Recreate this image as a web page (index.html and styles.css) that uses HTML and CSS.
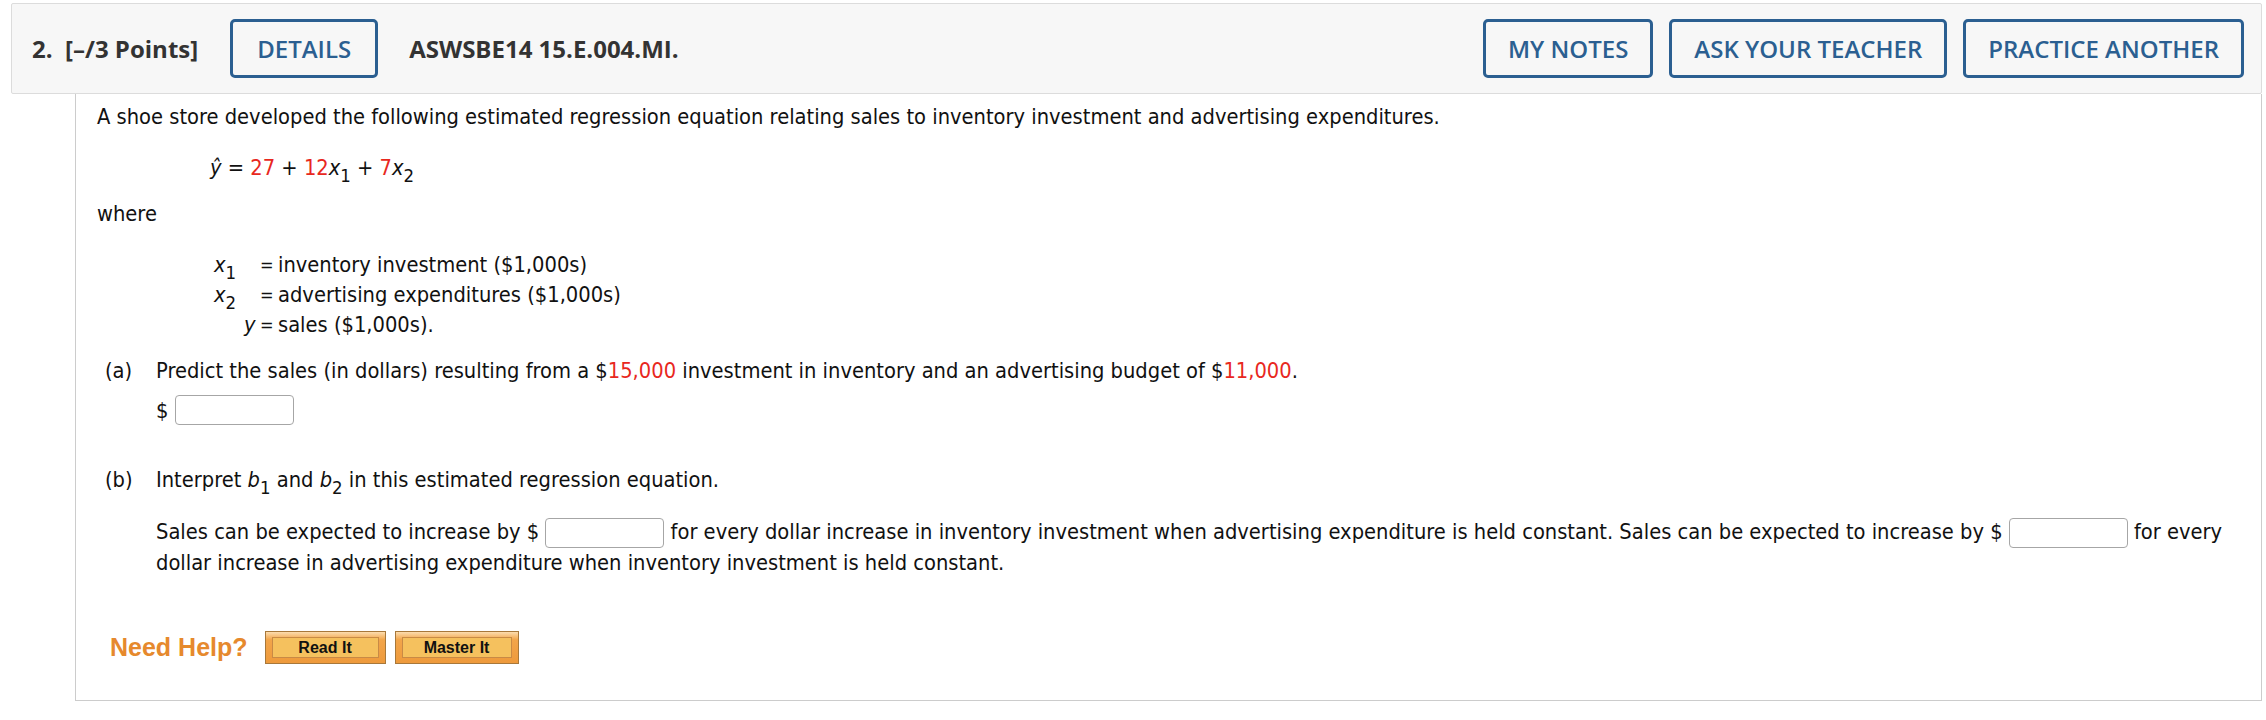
FILE: index.html
```html
<!DOCTYPE html>
<html>
<head>
<meta charset="utf-8">
<link rel="stylesheet" href="styles.css">
</head>
<body>
<div class="page">
  <div class="qhead">
    <div class="qnum">2.&nbsp; [–/3 Points]</div>
    <button class="hbtn details">DETAILS</button>
    <div class="qcode">ASWSBE14 15.E.004.MI.</div>
    <div class="spacer"></div>
    <button class="hbtn">MY NOTES</button>
    <button class="hbtn">ASK YOUR TEACHER</button>
    <button class="hbtn">PRACTICE ANOTHER</button>
  </div>
  <div class="qbody">
    <p class="line intro">A shoe store developed the following estimated regression equation relating sales to inventory investment and advertising expenditures.</p>
    <p class="line eq"><i>ŷ</i> = <span class="red">27</span> + <span class="red">12</span><i>x</i><sub>1</sub> + <span class="red">7</span><i>x</i><sub>2</sub></p>
    <p class="line where">where</p>
    <div class="defs">
      <div class="def"><span class="var"><i>x</i><sub>1</sub></span><span class="eqs">=</span><span>inventory investment ($1,000s)</span></div>
      <div class="def"><span class="var"><i>x</i><sub>2</sub></span><span class="eqs">=</span><span>advertising expenditures ($1,000s)</span></div>
      <div class="def"><span class="var yvar"><i>y</i></span><span class="eqs">=</span><span>sales ($1,000s).</span></div>
    </div>
    <div class="part parta">
      <span class="plabel">(a)</span>
      <span>Predict the sales (in dollars) resulting from a $<span class="red">15,000</span> investment in inventory and an advertising budget of $<span class="red">11,000</span>.</span>
    </div>
    <div class="answer">
      <span>$</span><span class="box wide"></span>
    </div>
    <div class="part partb">
      <span class="plabel">(b)</span>
      <span>Interpret <i>b</i><sub>1</sub> and <i>b</i><sub>2</sub> in this estimated regression equation.</span>
    </div>
    <p class="sales">Sales can be expected to increase by $ <span class="box"></span> for every dollar increase in inventory investment when advertising expenditure is held constant. Sales can be expected to increase by $ <span class="box"></span> for every<br>dollar increase in advertising expenditure when inventory investment is held constant.</p>
    <div class="help">
      <span class="needhelp">Need Help?</span>
      <span class="obtn read"><span class="inner">Read It</span></span>
      <span class="obtn master"><span class="inner">Master It</span></span>
    </div>
  </div>
</div>
</body>
</html>
```
FILE: styles.css
```css
html, body {
  margin: 0;
  padding: 0;
  background: #ffffff;
}
.page {
  padding: 3px 4px 0 11px;
}
.qhead {
  display: flex;
  align-items: center;
  height: 89px;
  background: #f7f7f7;
  border: 1px solid #dcdcdc;
  border-radius: 2px;
  padding: 0 17px 0 20px;
  font-family: "Open Sans", "Liberation Sans", sans-serif;
  font-weight: 600;
  font-size: 24px;
  color: #333333;
}
.qnum {
  font-weight: 700;
  margin-right: 32px;
}
.qcode {
  font-weight: 700;
  margin-left: 31px;
}
.spacer {
  flex: 1;
}
.hbtn {
  height: 59px;
  box-sizing: border-box;
  border: 3px solid #2b5f91;
  border-radius: 5px;
  background: #f7f7f7;
  color: #2b5f91;
  font-family: "Open Sans", "Liberation Sans", sans-serif;
  font-weight: 600;
  font-size: 24px;
  padding: 0 22px;
  margin-left: 16px;
}
.hbtn.details {
  margin-left: 0;
  padding: 0 24px;
}
.qbody {
  margin-left: 64px;
  border: 1px solid #cccccc;
  border-top: none;
  height: 607px;
  box-sizing: border-box;
  padding: 8px 21px 0 21px;
  font-family: "DejaVu Sans", Verdana, sans-serif;
  font-stretch: condensed;
  font-size: 21.7px;
  line-height: 29px;
  color: #111111;
}
p {
  margin: 0;
}
.red {
  color: #e8281e;
}
sub {
  font-size: 0.85em;
  vertical-align: -0.4em;
  line-height: 0;
}
.intro {
  white-space: nowrap;
}
.eq {
  margin-top: 22px;
  margin-left: 113px;
}
.where {
  margin-top: 17px;
}
.defs {
  margin-top: 21px;
  margin-left: 117px;
}
.def {
  display: flex;
  height: 30px;
  align-items: center;
  white-space: nowrap;
}
.var {
  width: 46px;
  flex: none;
}
.var.yvar {
  box-sizing: border-box;
  padding-left: 30px;
}
.eqs {
  width: 18px;
  flex: none;
  font-size: 18px;
}
.part {
  display: flex;
  white-space: nowrap;
}
.plabel {
  display: inline-block;
  width: 51px;
  padding-left: 8px;
  flex: none;
}
.parta {
  margin-top: 17px;
}
.answer {
  margin-top: 10px;
  margin-left: 59px;
  height: 30px;
  display: flex;
  align-items: center;
  gap: 7px;
}
.box {
  display: inline-block;
  width: 119px;
  height: 30px;
  box-sizing: border-box;
  border: 1px solid #a6a6a6;
  border-radius: 4px;
  background: #ffffff;
  vertical-align: middle;
}
.partb {
  margin-top: 40px;
}
.sales {
  margin-top: 23px;
  margin-left: 59px;
  white-space: nowrap;
}
.help {
  margin-top: 54px;
  margin-left: 13px;
  display: flex;
  align-items: center;
  height: 33px;
}
.needhelp {
  font-family: "Liberation Sans", Arial, sans-serif;
  font-weight: 700;
  font-size: 25px;
  color: #e6892d;
  margin-right: 17px;
}
.obtn {
  display: inline-flex;
  box-sizing: border-box;
  height: 33px;
  border: 1px solid #a8783a;
  background: linear-gradient(#fcdcae, #f2a54a 25%, #ee9a3c);
  padding: 5px 6px;
}
.obtn .inner {
  flex: 1;
  display: flex;
  align-items: center;
  justify-content: center;
  border: 1px solid #c98a45;
  background: #f5c15e;
  font-family: "Liberation Sans", Arial, sans-serif;
  font-weight: 700;
  font-size: 16px;
  color: #111111;
}
.obtn.read {
  width: 121px;
  margin-right: 9px;
}
.obtn.master {
  width: 124px;
}
```
